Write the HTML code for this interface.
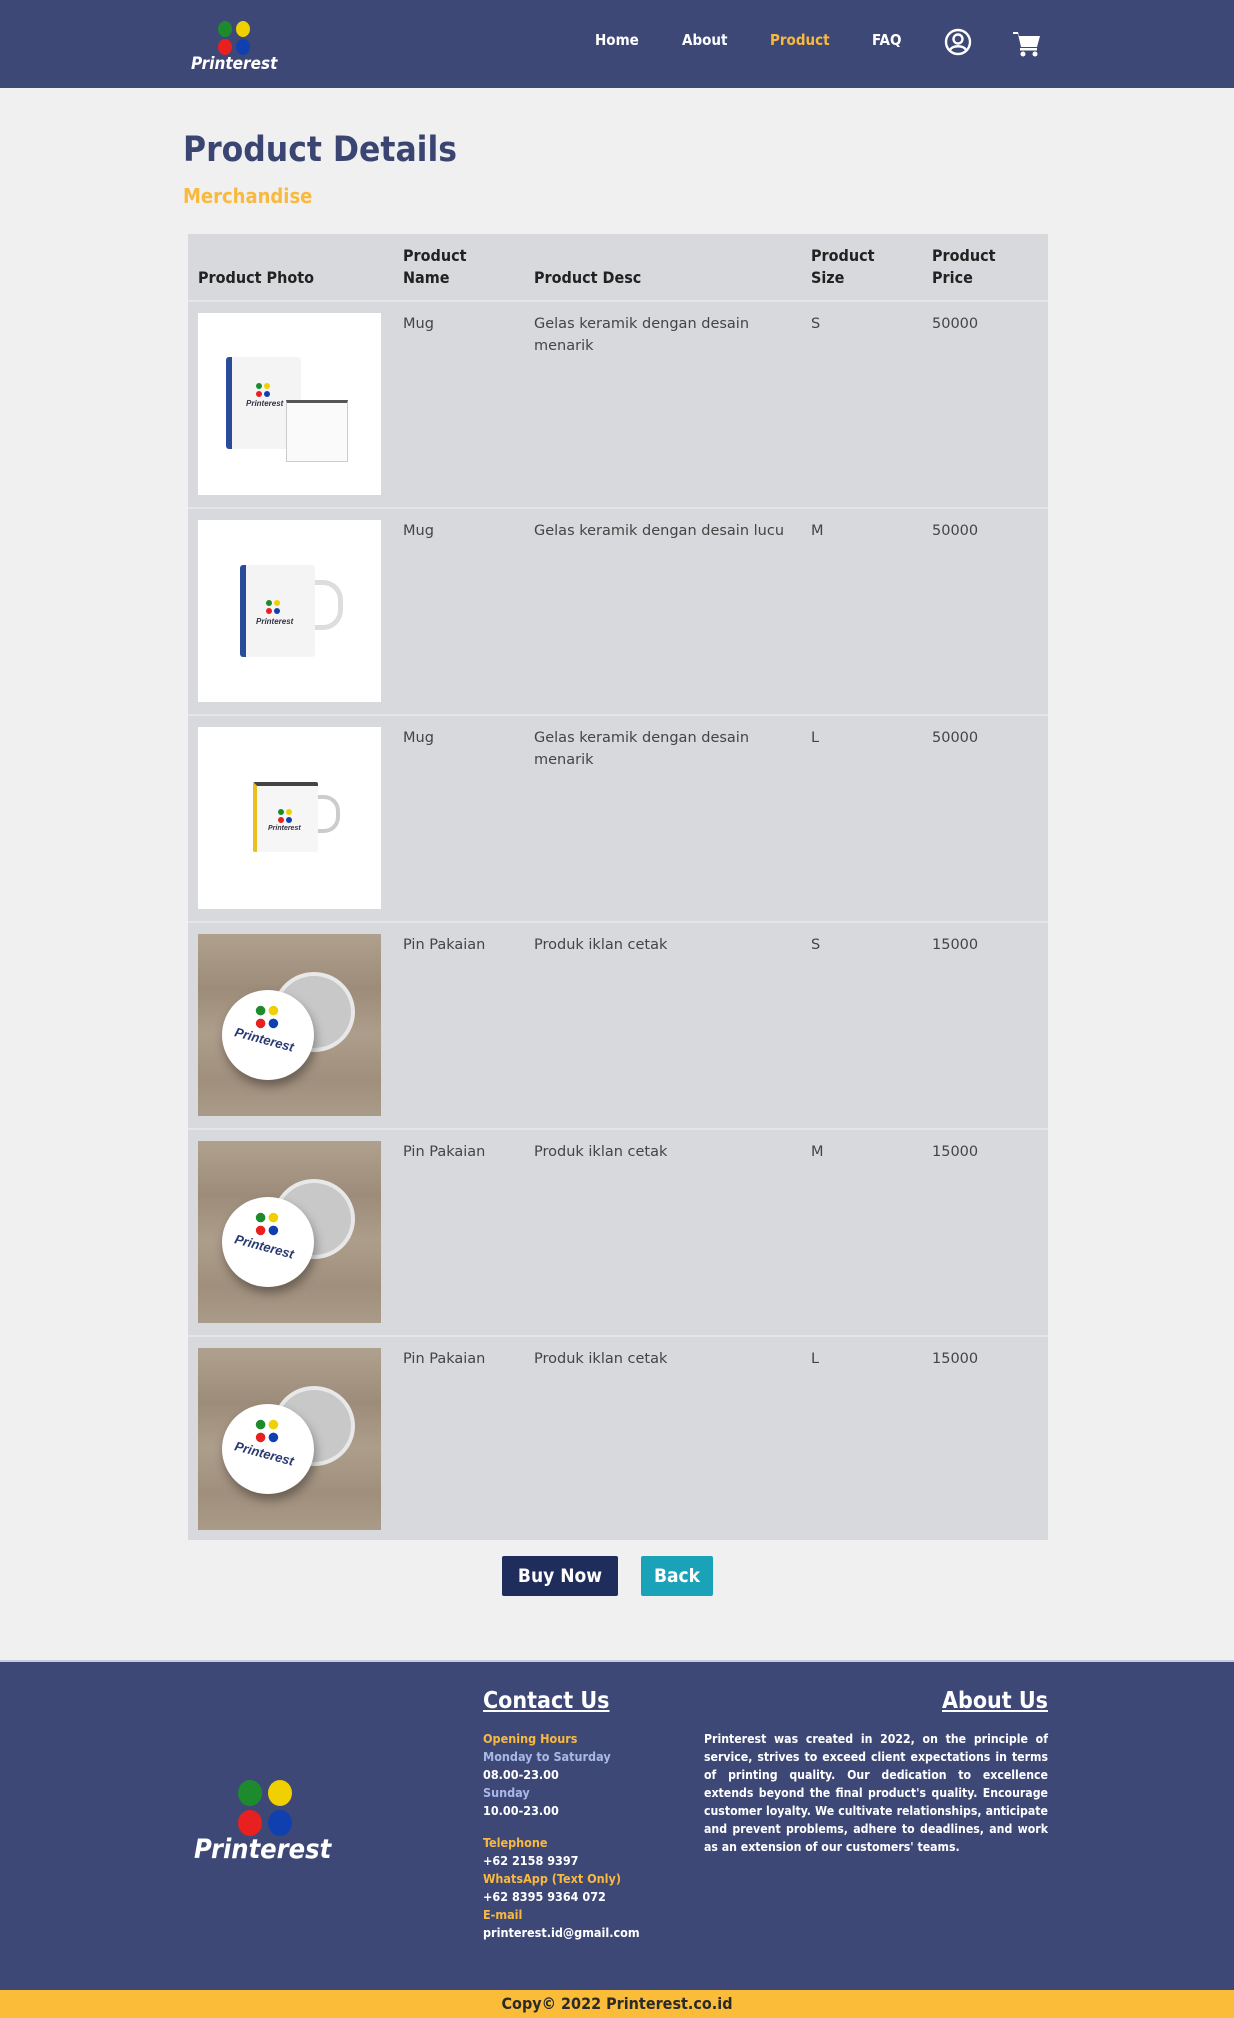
<!DOCTYPE html>
<html><head><meta charset="utf-8"><style>
*{margin:0;padding:0;box-sizing:border-box}
body{width:1234px;height:2018px;background:#f0f0f0;font-family:"DejaVu Sans",sans-serif;position:relative;overflow:hidden}
.nav{position:absolute;left:0;top:0;width:1234px;height:88px;background:#3e4877}
.nav a{position:absolute;top:31px;color:#fff;font:bold 15px "DejaVu Sans Condensed","DejaVu Sans",sans-serif;text-decoration:none}
.dots{position:absolute}
.dots i{position:absolute;border-radius:50%}
h1{position:absolute;left:183px;top:130px;font:bold 35px "DejaVu Sans Condensed","DejaVu Sans",sans-serif;color:#3b4572}
h2{position:absolute;left:183px;top:184px;font:bold 20px "DejaVu Sans Condensed","DejaVu Sans",sans-serif;color:#f9b93e}
.tbl{position:absolute;left:188px;top:234px;width:860px;height:1306px;background:#d8d9dc}
.th{position:absolute;font:bold 16px "DejaVu Sans Condensed","DejaVu Sans",sans-serif;color:#222;line-height:22px}
.row{position:absolute;left:0;width:860px;height:207px;border-top:2px solid #e4e5e8}
.row .c{position:absolute;top:11px;font-size:14.5px;color:#444;line-height:22px}
.img{position:absolute;left:10px;top:11px;width:183px;height:182px;background:#fff;overflow:hidden}
.wood{background:linear-gradient(180deg,#b0a08e,#9d8c7a 30%,#ad9d8b 55%,#a08f7d 80%,#aa9a88)}
.btn{position:absolute;top:1556px;height:40px;color:#fff;font:bold 19px "DejaVu Sans Condensed","DejaVu Sans",sans-serif;text-align:center;line-height:40px;border-radius:2px}
.foot{position:absolute;left:0;top:1660px;width:1234px;height:330px;background:#3e4877;border-top:2px solid #c8cbe0}
.copy{position:absolute;left:0;top:1990px;width:1234px;height:28px;background:#fbbc3a;text-align:center;font:bold 16px "DejaVu Sans Condensed","DejaVu Sans",sans-serif;color:#2a2a2a;line-height:28px}
.fl{position:absolute;font:bold 12.5px "DejaVu Sans Condensed","DejaVu Sans",sans-serif;line-height:18px}
.md{position:absolute;width:14px;height:14px}
.md i{position:absolute;width:6px;height:6px;border-radius:50%}
</style></head><body>
<div class="nav">
 <div class="dots" style="left:218px;top:21px"><i style="left:0;top:0;width:14px;height:16px;background:#1e8a2e"></i><i style="left:18px;top:0;width:14px;height:16px;background:#f0d000"></i><i style="left:0;top:18px;width:14px;height:16px;background:#e82020"></i><i style="left:18px;top:18px;width:14px;height:16px;background:#1040b0"></i></div>
 <div style="position:absolute;left:191px;top:54px;color:#fff;font:italic bold 17px 'DejaVu Sans Condensed',sans-serif">Printerest</div>
 <a style="left:595px">Home</a><a style="left:682px">About</a><a style="left:770px;color:#f9b93e">Product</a><a style="left:872px">FAQ</a>
 <svg style="position:absolute;left:944px;top:28px" width="28" height="28" viewBox="0 0 28 28" fill="none" stroke="#fff" stroke-width="2.4"><circle cx="14" cy="14" r="12"/><circle cx="14" cy="11" r="4.5"/><path d="M6 22c2-5 14-5 16 0"/></svg>
 <svg style="position:absolute;left:1013px;top:31px" width="28" height="26" viewBox="0 0 28 26" fill="#fff"><path d="M0 1h5l1 4h21l-3 11H8l-3-13H0z"/><rect x="7" y="17" width="17" height="2.5"/><circle cx="10" cy="23" r="2.5"/><circle cx="22" cy="23" r="2.5"/></svg>
</div>
<h1>Product Details</h1>
<h2>Merchandise</h2>
<div class="tbl">
 <div class="th" style="left:10px;top:33px">Product Photo</div>
 <div class="th" style="left:215px;top:11px">Product<br>Name</div>
 <div class="th" style="left:346px;top:33px">Product Desc</div>
 <div class="th" style="left:623px;top:11px">Product<br>Size</div>
 <div class="th" style="left:744px;top:11px">Product<br>Price</div>

 <div class="row" style="top:66px"><div class="img"><div style="position:absolute;left:28px;top:44px;width:75px;height:92px;background:#f4f4f4;border-left:6px solid #2a4a9a;border-radius:3px"></div><div style="position:absolute;left:88px;top:87px;width:62px;height:62px;background:#fafafa;border:1px solid #ccc;border-top:3px solid #555"></div><div class="md" style="left:58px;top:70px"><i style="left:0;top:0;background:#1e8a2e"></i><i style="left:8px;top:0;background:#f0d000"></i><i style="left:0;top:8px;background:#e82020"></i><i style="left:8px;top:8px;background:#1040b0"></i></div><div style="position:absolute;left:48px;top:86px;font:bold italic 8px sans-serif;color:#334">Printerest</div></div>
  <div class="c" style="left:215px">Mug</div><div class="c" style="left:346px;width:225px">Gelas keramik dengan desain menarik</div><div class="c" style="left:623px">S</div><div class="c" style="left:744px">50000</div></div>
 <div class="row" style="top:273px"><div class="img"><div style="position:absolute;left:42px;top:45px;width:75px;height:92px;background:#f4f4f4;border-left:6px solid #2a4a9a;border-radius:3px"></div><div style="position:absolute;left:117px;top:60px;width:28px;height:50px;border:5px solid #ddd;border-left:none;border-radius:0 20px 20px 0"></div><div class="md" style="left:68px;top:80px"><i style="left:0;top:0;background:#1e8a2e"></i><i style="left:8px;top:0;background:#f0d000"></i><i style="left:0;top:8px;background:#e82020"></i><i style="left:8px;top:8px;background:#1040b0"></i></div><div style="position:absolute;left:58px;top:97px;font:bold italic 8px sans-serif;color:#334">Printerest</div></div>
  <div class="c" style="left:215px">Mug</div><div class="c" style="left:346px;width:270px">Gelas keramik dengan desain lucu</div><div class="c" style="left:623px">M</div><div class="c" style="left:744px">50000</div></div>
 <div class="row" style="top:480px"><div class="img"><div style="position:absolute;left:55px;top:55px;width:65px;height:70px;background:#f6f6f6;border-top:4px solid #444;border-left:4px solid #e8c020;border-radius:2px"></div><div style="position:absolute;left:120px;top:68px;width:22px;height:38px;border:4px solid #ccc;border-left:none;border-radius:0 16px 16px 0"></div><div class="md" style="left:80px;top:82px"><i style="left:0;top:0;background:#1e8a2e"></i><i style="left:8px;top:0;background:#f0d000"></i><i style="left:0;top:8px;background:#e82020"></i><i style="left:8px;top:8px;background:#1040b0"></i></div><div style="position:absolute;left:70px;top:98px;font:bold italic 7px sans-serif;color:#334">Printerest</div></div>
  <div class="c" style="left:215px">Mug</div><div class="c" style="left:346px;width:225px">Gelas keramik dengan desain menarik</div><div class="c" style="left:623px">L</div><div class="c" style="left:744px">50000</div></div>
 <div class="row" style="top:687px"><div class="img wood"><div style="position:absolute;left:75px;top:38px;width:82px;height:80px;border-radius:50%;background:#c8c8c8;border:4px solid #e8e8e8"></div><div style="position:absolute;left:24px;top:56px;width:92px;height:90px;border-radius:50%;background:#fff;box-shadow:2px 6px 10px rgba(0,0,0,.35)"></div><div class="md" style="left:62px;top:76px;transform:scale(1.6)"><i style="left:0;top:0;background:#1e8a2e"></i><i style="left:8px;top:0;background:#f0d000"></i><i style="left:0;top:8px;background:#e82020"></i><i style="left:8px;top:8px;background:#1040b0"></i></div><div style="position:absolute;left:36px;top:98px;font:bold italic 13px sans-serif;color:#2a3a70;transform:rotate(15deg)">Printerest</div></div>
  <div class="c" style="left:215px">Pin Pakaian</div><div class="c" style="left:346px">Produk iklan cetak</div><div class="c" style="left:623px">S</div><div class="c" style="left:744px">15000</div></div>
 <div class="row" style="top:894px"><div class="img wood"><div style="position:absolute;left:75px;top:38px;width:82px;height:80px;border-radius:50%;background:#c8c8c8;border:4px solid #e8e8e8"></div><div style="position:absolute;left:24px;top:56px;width:92px;height:90px;border-radius:50%;background:#fff;box-shadow:2px 6px 10px rgba(0,0,0,.35)"></div><div class="md" style="left:62px;top:76px;transform:scale(1.6)"><i style="left:0;top:0;background:#1e8a2e"></i><i style="left:8px;top:0;background:#f0d000"></i><i style="left:0;top:8px;background:#e82020"></i><i style="left:8px;top:8px;background:#1040b0"></i></div><div style="position:absolute;left:36px;top:98px;font:bold italic 13px sans-serif;color:#2a3a70;transform:rotate(15deg)">Printerest</div></div>
  <div class="c" style="left:215px">Pin Pakaian</div><div class="c" style="left:346px">Produk iklan cetak</div><div class="c" style="left:623px">M</div><div class="c" style="left:744px">15000</div></div>
 <div class="row" style="top:1101px"><div class="img wood"><div style="position:absolute;left:75px;top:38px;width:82px;height:80px;border-radius:50%;background:#c8c8c8;border:4px solid #e8e8e8"></div><div style="position:absolute;left:24px;top:56px;width:92px;height:90px;border-radius:50%;background:#fff;box-shadow:2px 6px 10px rgba(0,0,0,.35)"></div><div class="md" style="left:62px;top:76px;transform:scale(1.6)"><i style="left:0;top:0;background:#1e8a2e"></i><i style="left:8px;top:0;background:#f0d000"></i><i style="left:0;top:8px;background:#e82020"></i><i style="left:8px;top:8px;background:#1040b0"></i></div><div style="position:absolute;left:36px;top:98px;font:bold italic 13px sans-serif;color:#2a3a70;transform:rotate(15deg)">Printerest</div></div>
  <div class="c" style="left:215px">Pin Pakaian</div><div class="c" style="left:346px">Produk iklan cetak</div><div class="c" style="left:623px">L</div><div class="c" style="left:744px">15000</div></div>
</div>
<div class="btn" style="left:502px;width:116px;background:#1f2d5c">Buy Now</div>
<div class="btn" style="left:641px;width:72px;background:#1aa3b8">Back</div>
<div class="foot">
 <div class="dots" style="left:238px;top:118px"><i style="left:0;top:0;width:24px;height:26px;background:#1e8a2e"></i><i style="left:30px;top:0;width:24px;height:26px;background:#f0d000"></i><i style="left:0;top:30px;width:24px;height:26px;background:#e82020"></i><i style="left:30px;top:30px;width:24px;height:26px;background:#1040b0"></i></div>
 <div style="position:absolute;left:194px;top:172px;color:#fff;font:italic bold 27px 'DejaVu Sans Condensed',sans-serif">Printerest</div>
 <div style="position:absolute;left:483px;top:26px;color:#fff;font:bold 23px 'DejaVu Sans Condensed',sans-serif;text-decoration:underline">Contact Us</div>
 <div style="position:absolute;right:186px;top:26px;color:#fff;font:bold 23px 'DejaVu Sans Condensed',sans-serif;text-decoration:underline">About Us</div>
 <div class="fl" style="left:483px;top:68px;color:#fff">
  <div style="color:#f9b93e">Opening Hours</div><div style="color:#a9b8e8">Monday to Saturday</div><div>08.00-23.00</div><div style="color:#a9b8e8">Sunday</div><div>10.00-23.00</div><div style="height:14px"></div>
  <div style="color:#f9b93e">Telephone</div><div>+62 2158 9397</div><div style="color:#f9b93e">WhatsApp (Text Only)</div><div>+62 8395 9364 072</div><div style="color:#f9b93e">E-mail</div><div>printerest.id@gmail.com</div>
 </div>
 <div class="fl" style="left:704px;top:68px;width:344px;color:#fff;text-align:justify;font-size:12.2px">Printerest was created in 2022, on the principle of service, strives to exceed client expectations in terms of printing quality. Our dedication to excellence extends beyond the final product's quality. Encourage customer loyalty. We cultivate relationships, anticipate and prevent problems, adhere to deadlines, and work as an extension of our customers' teams.</div>
</div>
<div class="copy">Copy© 2022 Printerest.co.id</div>
</body></html>
